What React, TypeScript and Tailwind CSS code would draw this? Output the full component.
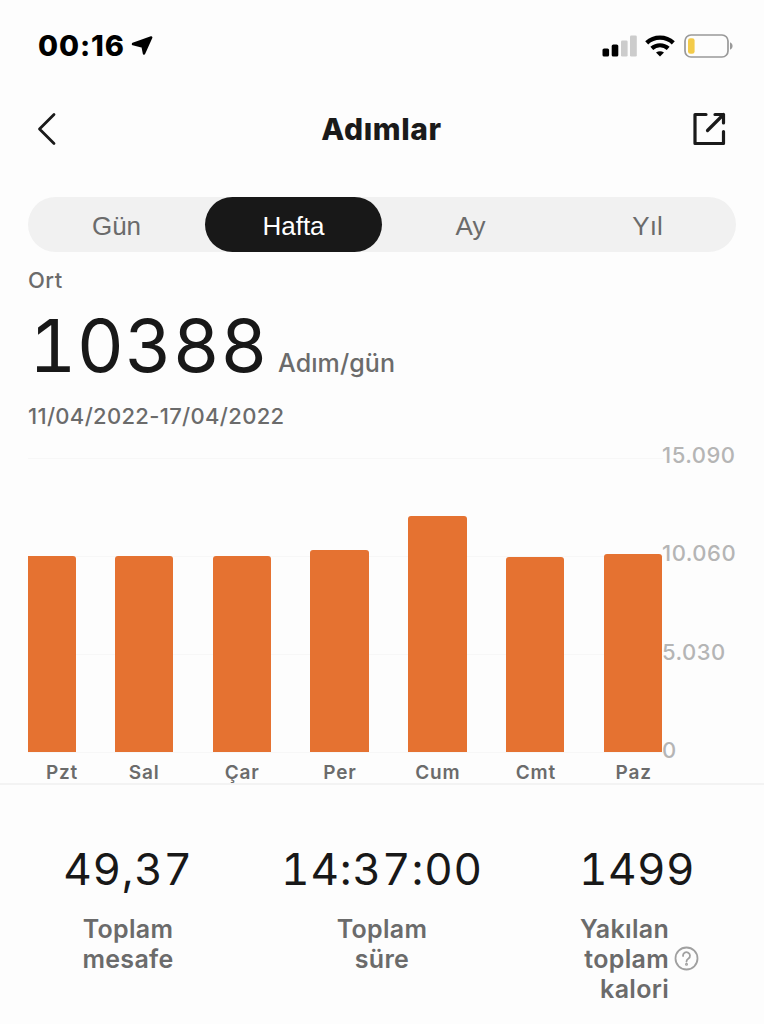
const tabs = ["Gün", "Hafta", "Ay", "Yıl"]

const bars = [
  { day: "Pzt", height: 196 },
  { day: "Sal", height: 196 },
  { day: "Çar", height: 196 },
  { day: "Per", height: 202 },
  { day: "Cum", height: 236 },
  { day: "Cmt", height: 195 },
  { day: "Paz", height: 198 },
]

const scale = ["15.090", "10.060", "5.030", "0"]

function StatusBar() {
  return (
    <div className="flex h-[92px] items-center justify-between pl-[38px] pr-[31px] text-black">
      <div className="flex items-center gap-[6px]">
        <span className="w-[87px] whitespace-nowrap pb-[2px] text-[29px] font-extrabold leading-none tracking-[0.9px]">00:16</span>
        <svg width="22" height="20" viewBox="0 0 22 20">
          <path d="M2 8 20.2 1.4 13 17.6 11.6 10.6Z" fill="currentColor" stroke="currentColor" strokeWidth="2.4" strokeLinejoin="round" />
        </svg>
      </div>
      <div className="flex items-center">
        <svg width="36" height="22" viewBox="0 0 36 22">
          <rect x="0.5" y="13.5" width="6.6" height="8" rx="1.6" />
          <rect x="9.7" y="9.5" width="6.6" height="12" rx="1.6" />
          <rect x="19" y="5.5" width="6.6" height="16" rx="1.3" fill="#cccccc" />
          <rect x="28" y="0.5" width="6.8" height="21" rx="1.3" fill="#cccccc" />
        </svg>
        <svg className="ml-[7px]" width="31" height="22" viewBox="0 0 31 22" fill="none" stroke="#000">
          <path d="M1.7 7.8A19.6 19.6 0 0 1 28.3 7.8" strokeWidth="4.4" />
          <path d="M6.8 13.4A12.2 12.2 0 0 1 23.2 13.4" strokeWidth="4.2" />
          <path d="M11 17.6A6.8 6.8 0 0 1 19 17.6L15 21.6Z" fill="#000" stroke="none" />
        </svg>
        <svg className="ml-[8px]" width="49" height="24" viewBox="0 0 49 24">
          <rect x="1" y="1" width="43" height="22" rx="6" fill="none" stroke="#999" strokeWidth="1.7" />
          <rect x="4" y="4.2" width="6.6" height="15.6" rx="2.4" fill="#f3cb4a" />
          <path d="M46 8.3C49.4 9.6 49.4 14.4 46 15.7Z" fill="#999" />
        </svg>
      </div>
    </div>
  )
}

function Header() {
  return (
    <div className="flex h-[74px] items-center justify-between pl-[37px] pr-[38px] text-[#1a1a1a]">
      <svg width="34" height="34" viewBox="0 0 34 34" fill="none" stroke="currentColor" strokeWidth="2.8" strokeLinecap="round" strokeLinejoin="round">
        <path d="M17 2.5 2.5 17 17 31.5" />
      </svg>
      <h1 className="text-[30px] font-extrabold leading-none tracking-[0.6px]">Adımlar</h1>
      <svg width="34" height="34" viewBox="0 0 34 34" fill="none" stroke="currentColor" strokeWidth="3.2" strokeLinecap="round" strokeLinejoin="round">
        <path d="M14 2.5H3V31.5H31.5V19.5" />
        <path d="M23 2.5H31.5V11M31.5 2.5 15.5 18.5" />
      </svg>
    </div>
  )
}

function Chart() {
  return (
    <div className="relative mx-7 h-[349px]">
      {/* grid */}
      <div className="absolute left-0 top-[24px] flex h-[295px] w-[635px] flex-col justify-between">
        {scale.map((value) => (
          <div key={value} className="h-px bg-[#f7f7f7]" />
        ))}
      </div>
      <div className="flex justify-between">
        <div className="relative flex h-[318px] w-[635px] items-end justify-between">
          {bars.map((bar, index) => (
            <div
              key={bar.day}
              className={index === 0 ? "w-[47.5px] rounded-tr-[3px] bg-[#e57231]" : "w-[58.5px] rounded-t-[3px] bg-[#e57231]"}
              style={{ height: bar.height }}
            />
          ))}
        </div>
        <div className="relative flex h-[328px] w-[74px] flex-col justify-between pt-[9px] text-[22px] font-medium leading-[24px] tracking-[0.5px] text-[#b5b5b5]">
          {scale.map((value) => (
            <span key={value} className="whitespace-nowrap">{value}</span>
          ))}
        </div>
      </div>
      <div className="-mt-px flex w-[635px] justify-between text-center text-[19px] font-semibold leading-[24px] tracking-[0.8px] text-[#6b6b6b]">
        {bars.map((bar, index) => (
          <span key={bar.day} className={index === 0 ? "w-[47.5px] pl-[18px]" : "w-[58.5px]"}>{bar.day}</span>
        ))}
      </div>
    </div>
  )
}

export default function App() {
  return (
    <div className="h-[1024px] w-[764px] overflow-hidden bg-[#fdfdfd] font-['Inter',sans-serif]">
      <StatusBar />
      <Header />

      <div className="mx-7 mt-[31px] flex h-[55px] rounded-full bg-[#f1f1f1] font-['Liberation_Sans',sans-serif] text-[26px]">
        {tabs.map((tab) => (
          <div
            key={tab}
            className={
              tab === "Hafta"
                ? "flex flex-1 items-center justify-center rounded-full bg-[#181818] pt-[3px] text-white"
                : "flex flex-1 items-center justify-center pt-[3px] text-[#6b6b6b]"
            }
          >
            {tab}
          </div>
        ))}
      </div>

      <div className="mx-7 mt-[16px] text-[#6b6b6b]">
        <div className="text-[22px] font-[550] leading-[24px] tracking-[0.5px]">Ort</div>
        <div className="mt-[18px] flex h-[72px] items-baseline">
          <span className="w-[250px] whitespace-nowrap pl-px text-[73px] leading-[72px] tracking-[0.5px] tabular-nums text-[#181818]">10388</span>
          <span className="pb-px text-[25px] font-[550] tracking-[0.1px]">Adım/gün</span>
        </div>
        <div className="mt-[22px] text-[22px] font-[550] leading-[24px] tracking-[0.32px]">11/04/2022-17/04/2022</div>
      </div>

      <div className="mt-[6px]">
        <Chart />
      </div>
      <div className="h-[2px] bg-[#f3f3f3]" />

      <div className="flex justify-between pl-[28px] pr-[28px] pt-[59px] text-center text-[25px] font-[560] leading-[30.3px] tracking-[0.3px] text-[#6b6b6b]">
        <div className="w-[200px]">
          <div className="text-[44px] font-normal leading-[50px] tracking-[0.7px] tabular-nums text-[#181818]">49,37</div>
          <div className="mt-[19.5px]">Toplam<br />mesafe</div>
        </div>
        <div className="w-[240px]">
          <div className="text-[44px] font-normal leading-[50px] tracking-[0.9px] tabular-nums text-[#181818]">14:37:00</div>
          <div className="mt-[19.5px]">Toplam<br />süre</div>
        </div>
        <div className="w-[200px] pl-[2px]">
          <div className="text-[44px] font-normal leading-[50px] tracking-[0.5px] tabular-nums text-[#181818]">1499</div>
          <div className="mt-[19.5px] flex items-center justify-center gap-[5px] pl-[5px]">
            <div className="text-right">Yakılan<br />toplam<br />kalori</div>
            <svg width="25" height="25" viewBox="0 0 25 25" fill="none" stroke="#a0a0a0" strokeWidth="1.8">
              <circle cx="12.5" cy="12.5" r="11" />
              <path d="M9 10A3.5 3.5 0 1 1 14.5 12.6C13 13.6 12.5 14 12.5 15.5" strokeLinecap="round" />
              <circle cx="12.5" cy="18.2" r="0.6" />
            </svg>
          </div>
        </div>
      </div>
    </div>
  )
}
